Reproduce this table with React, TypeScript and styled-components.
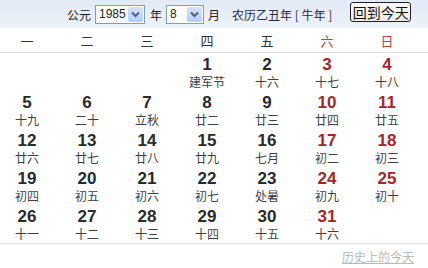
import React from "react";
import styled, { createGlobalStyle } from "styled-components";

const GlobalStyle = createGlobalStyle`
  html, body {
    margin: 0;
    padding: 0;
    background: #ffffff;
  }
  body {
    font-family: "Liberation Sans", "Noto Sans CJK SC", sans-serif;
    color: #333;
  }
`;

const Wrapper = styled.div`
  width: 428px;
  height: 268px;
  overflow: hidden;
  background: #fff;
`;

const Toolbar = styled.div`
  height: 28px;
  display: flex;
  align-items: center;
  padding-left: 67px;
  background: linear-gradient(#e2eaf6, #edf2f9);
  font-size: 12px;
  font-family: "Noto Sans CJK SC", sans-serif;
  color: #222;
`;

const Label = styled.span<{ $ml?: number }>`
  margin-left: ${(p) => p.$ml ?? 0}px;
  white-space: nowrap;
`;

const FakeSelect = styled.div<{ $w: number; $ml: number }>`
  width: ${(p) => p.$w}px;
  height: 19px;
  margin-left: ${(p) => p.$ml}px;
  box-sizing: border-box;
  border: 1px solid #7f9db9;
  background: #fff;
  display: flex;
  align-items: center;
  justify-content: space-between;
  font-family: "Liberation Sans", sans-serif;
  font-size: 12px;
  padding-left: 3px;
`;

const Arrow = styled.span`
  width: 15px;
  height: 15px;
  margin-right: 1px;
  background: linear-gradient(#d4e1fb, #b8cdf6);
  border-radius: 2px;
  display: flex;
  align-items: center;
  justify-content: center;
`;

const Lunar = styled.span`
  margin-left: 12px;
  color: #2b2b45;
  white-space: nowrap;
`;

const TodayButton = styled.button`
  margin-left: 18px;
  margin-top: -4px;
  height: 20px;
  width: 61px;
  padding: 0;
  border: 1px solid #222;
  border-radius: 3px;
  background: linear-gradient(#ffffff, #ece9e2);
  font-family: "Noto Sans CJK SC", sans-serif;
  font-size: 14px;
  line-height: 16px;
  color: #111;
`;

const Grid = styled.div`
  display: grid;
  grid-template-columns: repeat(7, 54px);
  column-gap: 6px;
`;

const WeekRow = styled(Grid)`
  height: 24px;
  align-items: center;
  border-bottom: 1px solid #dcdcdc;
  font-family: "Noto Sans CJK SC", sans-serif;
  font-size: 13px;
`;

const WeekLabel = styled.div<{ $weekend: boolean }>`
  text-align: center;
  color: ${(p) => (p.$weekend ? "#b2433f" : "#333")};
`;

const DayGrid = styled(Grid)`
  grid-auto-rows: 38px;
  border-bottom: 1px solid #e2e2e2;
  height: 190px;
`;

const Cell = styled.div`
  display: flex;
  flex-direction: column;
  align-items: center;
  padding-top: 3px;
  gap: 2px;
`;

const DayNum = styled.div<{ $weekend: boolean }>`
  font-family: "Liberation Sans", sans-serif;
  font-weight: bold;
  font-size: 17px;
  line-height: 17px;
  color: ${(p) => (p.$weekend ? "#a3272a" : "#2a2a2a")};
`;

const LunarDay = styled.div`
  font-family: "Noto Sans CJK SC", sans-serif;
  font-size: 12px;
  line-height: 14px;
  color: #3f3f3f;
`;

const Footer = styled.div`
  display: flex;
  justify-content: flex-end;
  padding: 6px 14px 0 0;
`;

const HistoryLink = styled.a`
  font-family: "Noto Sans CJK SC", sans-serif;
  font-size: 12px;
  line-height: 14px;
  color: #b8b8b8;
  text-decoration: underline;
`;

const weekdays = ["一", "二", "三", "四", "五", "六", "日"];

const lunar: Record<number, string> = {
  1: "建军节", 2: "十六", 3: "十七", 4: "十八", 5: "十九", 6: "二十", 7: "立秋",
  8: "廿二", 9: "廿三", 10: "廿四", 11: "廿五", 12: "廿六", 13: "廿七", 14: "廿八",
  15: "廿九", 16: "七月", 17: "初二", 18: "初三", 19: "初四", 20: "初五", 21: "初六",
  22: "初七", 23: "处暑", 24: "初九", 25: "初十", 26: "十一", 27: "十二", 28: "十三",
  29: "十四", 30: "十五", 31: "十六",
};

const Chevron = () => (
  <svg width="9" height="7" viewBox="0 0 9 7">
    <path d="M1 1.5 L4.5 5 L8 1.5" fill="none" stroke="#4d6185" strokeWidth="2" />
  </svg>
);

export default function App() {
  const offset = 3; // 1985-08-01 fell on a Thursday
  const cells: (number | null)[] = [];
  for (let i = 0; i < offset; i++) cells.push(null);
  for (let d = 1; d <= 31; d++) cells.push(d);

  return (
    <Wrapper>
      <GlobalStyle />
      <Toolbar>
        <Label>公元</Label>
        <FakeSelect $w={50} $ml={4}>
          1985
          <Arrow>
            <Chevron />
          </Arrow>
        </FakeSelect>
        <Label $ml={5}>年</Label>
        <FakeSelect $w={38} $ml={4}>
          8
          <Arrow>
            <Chevron />
          </Arrow>
        </FakeSelect>
        <Label $ml={4}>月</Label>
        <Lunar>农历乙丑年 [ 牛年 ]</Lunar>
        <TodayButton>回到今天</TodayButton>
      </Toolbar>
      <WeekRow>
        {weekdays.map((w, i) => (
          <WeekLabel key={w} $weekend={i >= 5}>
            {w}
          </WeekLabel>
        ))}
      </WeekRow>
      <DayGrid>
        {cells.map((d, i) => (
          <Cell key={i}>
            {d !== null && (
              <>
                <DayNum $weekend={i % 7 >= 5}>{d}</DayNum>
                <LunarDay>{lunar[d]}</LunarDay>
              </>
            )}
          </Cell>
        ))}
      </DayGrid>
      <Footer>
        <HistoryLink>历史上的今天</HistoryLink>
      </Footer>
    </Wrapper>
  );
}
